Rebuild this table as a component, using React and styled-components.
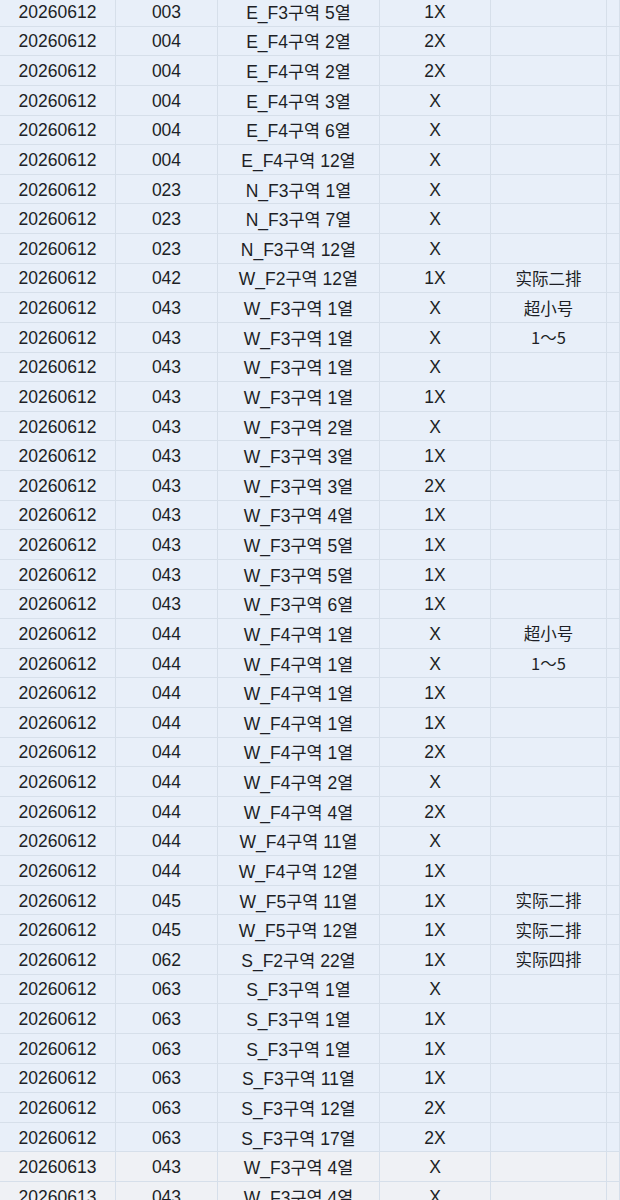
import React from "react";
import styled, { createGlobalStyle } from "styled-components";

const GlobalStyle = createGlobalStyle`
  html, body {
    margin: 0;
    padding: 0;
    background: #e8eff9;
  }
  body {
    font-family: "Liberation Sans", "Noto Sans CJK KR", "Noto Sans CJK SC", sans-serif;
    color: #1d1f26;
    overflow: hidden;
  }
`;

const Sheet = styled.div`
  width: 620px;
  margin-top: -3px;
`;

const Row = styled.div`
  display: grid;
  grid-template-columns: 116px 102px 162px 111px 116px 1fr;
  height: 29.63px;
  background: ${(props) => (props.alt ? "#eff1f5" : "#e8eff9")};
`;

const Cell = styled.div`
  box-sizing: border-box;
  display: flex;
  align-items: center;
  justify-content: center;
  border-right: 1px solid #d6dfea;
  border-bottom: 1px solid #d6dfea;
  font-size: 17.5px;
  white-space: nowrap;
  overflow: hidden;
  padding-top: 2px;
`;

const AreaCell = styled(Cell)`
  padding-top: 0;
`;

const NoteCell = styled(Cell)`
  font-family: "Noto Sans CJK SC", sans-serif;
  font-size: 16.5px;
  padding-top: 0;
`;

const rows = [
  ["20260612", "003", "E_F3구역 5열", "1X", ""],
  ["20260612", "004", "E_F4구역 2열", "2X", ""],
  ["20260612", "004", "E_F4구역 2열", "2X", ""],
  ["20260612", "004", "E_F4구역 3열", "X", ""],
  ["20260612", "004", "E_F4구역 6열", "X", ""],
  ["20260612", "004", "E_F4구역 12열", "X", ""],
  ["20260612", "023", "N_F3구역 1열", "X", ""],
  ["20260612", "023", "N_F3구역 7열", "X", ""],
  ["20260612", "023", "N_F3구역 12열", "X", ""],
  ["20260612", "042", "W_F2구역 12열", "1X", "实际二排"],
  ["20260612", "043", "W_F3구역 1열", "X", "超小号"],
  ["20260612", "043", "W_F3구역 1열", "X", "1～5"],
  ["20260612", "043", "W_F3구역 1열", "X", ""],
  ["20260612", "043", "W_F3구역 1열", "1X", ""],
  ["20260612", "043", "W_F3구역 2열", "X", ""],
  ["20260612", "043", "W_F3구역 3열", "1X", ""],
  ["20260612", "043", "W_F3구역 3열", "2X", ""],
  ["20260612", "043", "W_F3구역 4열", "1X", ""],
  ["20260612", "043", "W_F3구역 5열", "1X", ""],
  ["20260612", "043", "W_F3구역 5열", "1X", ""],
  ["20260612", "043", "W_F3구역 6열", "1X", ""],
  ["20260612", "044", "W_F4구역 1열", "X", "超小号"],
  ["20260612", "044", "W_F4구역 1열", "X", "1～5"],
  ["20260612", "044", "W_F4구역 1열", "1X", ""],
  ["20260612", "044", "W_F4구역 1열", "1X", ""],
  ["20260612", "044", "W_F4구역 1열", "2X", ""],
  ["20260612", "044", "W_F4구역 2열", "X", ""],
  ["20260612", "044", "W_F4구역 4열", "2X", ""],
  ["20260612", "044", "W_F4구역 11열", "X", ""],
  ["20260612", "044", "W_F4구역 12열", "1X", ""],
  ["20260612", "045", "W_F5구역 11열", "1X", "实际二排"],
  ["20260612", "045", "W_F5구역 12열", "1X", "实际二排"],
  ["20260612", "062", "S_F2구역 22열", "1X", "实际四排"],
  ["20260612", "063", "S_F3구역 1열", "X", ""],
  ["20260612", "063", "S_F3구역 1열", "1X", ""],
  ["20260612", "063", "S_F3구역 1열", "1X", ""],
  ["20260612", "063", "S_F3구역 11열", "1X", ""],
  ["20260612", "063", "S_F3구역 12열", "2X", ""],
  ["20260612", "063", "S_F3구역 17열", "2X", ""],
  ["20260613", "043", "W_F3구역 4열", "X", ""],
  ["20260613", "043", "W_F3구역 4열", "X", ""],
];

export default function App() {
  return (
    <>
      <GlobalStyle />
      <Sheet>
        {rows.map(([date, code, area, qty, note], i) => (
          <Row key={i} alt={date === "20260613"}>
            <Cell>{date}</Cell>
            <Cell>{code}</Cell>
            <AreaCell>{area}</AreaCell>
            <Cell>{qty}</Cell>
            <NoteCell>{note}</NoteCell>
            <Cell />
          </Row>
        ))}
      </Sheet>
    </>
  );
}
